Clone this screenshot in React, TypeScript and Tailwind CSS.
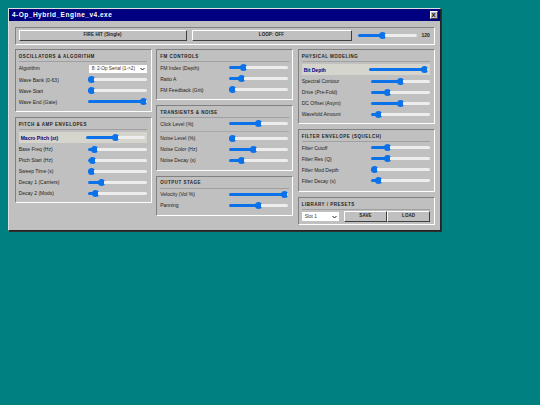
import React from "react";

function Slider({ v, className = "" }: { v: number; className?: string }) {
  return (
    <div className={"flex h-[7px] w-[59px] shrink-0 items-center " + className}>
      <div className="h-[3px] rounded-l-full bg-[#0b72ea]" style={{ width: 3.5 + v * 0.52 }} />
      <div className="ml-[-3.5px] h-[7px] w-[7px] shrink-0 rounded-full bg-[#0b72ea]" />
      <div className="ml-[-1px] h-[3px] flex-1 rounded-r-full bg-[#ededed]" />
    </div>
  );
}

function Row({ label, v }: { label: string; v: number }) {
  return (
    <div className="mb-[5px] flex h-[6px] items-center justify-between pr-[0.6px]">
      <span className="whitespace-nowrap text-[5px] leading-[6px] text-[#222]">{label}</span>
      <Slider v={v} />
    </div>
  );
}

function Macro({ label, v }: { label: string; v: number }) {
  return (
    <div className="mb-[3.5px] mt-[-0.5px] flex h-[10.5px] items-center justify-between bg-[#d6d5cd] pl-[2px] pr-[2.6px]">
      <span className="whitespace-nowrap text-[5px] font-bold leading-[6px] text-[#000080]">{label}</span>
      <Slider v={v} />
    </div>
  );
}

function Panel({ title, children, className = "" }: { title: string; children: React.ReactNode; className?: string }) {
  return (
    <section className={"border border-b-white border-l-[#808080] border-r-white border-t-[#808080] px-[3.2px] pt-[3.5px] " + className}>
      <h2 className="mb-[2.5px] whitespace-nowrap border-b border-[#a0a0a0] pb-[1.5px] text-[4.5px] font-bold leading-[6px] tracking-[0.5px] text-[#222]">
        {title}
      </h2>
      {children}
    </section>
  );
}

function Btn({ children, className = "" }: { children: React.ReactNode; className?: string }) {
  return (
    <button className={"flex items-center justify-center border border-b-[#404040] border-l-white border-r-[#404040] border-t-white bg-[#c0c0c0] text-[4.5px] font-bold tracking-[0.1px] text-[#222] " + className}>
      {children}
    </button>
  );
}

function Select({ text, className = "" }: { text: string; className?: string }) {
  return (
    <div className={"flex items-center justify-between whitespace-nowrap bg-white pl-[3px] pr-[2px] text-[4.75px] text-[#333] " + className}>
      <span>{text}</span>
      <svg width="5" height="4" viewBox="0 0 10 8" fill="none" stroke="#222" strokeWidth="2">
        <path d="M1 2l4 4 4-4" />
      </svg>
    </div>
  );
}

export default function App() {
  return (
    <div className="min-h-[405px] bg-[#008080] pl-[8px] pt-[8px] font-['Liberation_Sans',Arial,sans-serif]">
      <div className="w-[433px] border border-b-[#222] border-l-[#dfdfdf] border-r-[#222] border-t-[#dfdfdf] bg-[#c0c0c0] shadow-[1px_1px_0_#303030]">
        <div className="flex h-[12px] items-center justify-between bg-[#000080] pl-[3px] pr-[2.5px]">
          <span className="text-[6.5px] font-bold leading-[8px] tracking-[0.5px] text-white">4-Op_Hybrid_Engine_v4.exe</span>
          <div className="flex h-[8px] w-[8px] items-center justify-center border border-b-[#404040] border-l-white border-r-[#404040] border-t-white bg-[#c0c0c0] text-[6px] font-bold leading-none text-black">
            X
          </div>
        </div>
        <div className="flex flex-col gap-[4.75px] px-[5.5px] pb-[4.5px] pt-[5.5px]">
          <div className="flex h-[18px] items-center border border-b-white border-l-[#808080] border-r-white border-t-[#808080] pl-[3px]">
            <Btn className="h-[11px] w-[168px]">FIRE HIT (Single)</Btn>
            <Btn className="ml-[5px] h-[11px] w-[160px]">LOOP: OFF</Btn>
            <Slider v={42} className="ml-[6px]" />
            <span className="ml-[5px] text-[5px] font-bold text-[#222]">120</span>
          </div>
          <div className="flex items-start gap-[4.5px]">
            <div className="flex w-[137px] flex-col gap-[5px]">
              <Panel title="OSCILLATORS & ALGORITHM" className="h-[63px]">
                <div className="mb-[4px] flex h-[8px] items-center justify-between">
                  <span className="text-[5px] text-[#222]">Algorithm</span>
                  <Select text="8: 2-Op Serial (1->2)" className="h-[8px] w-[58.7px]" />
                </div>
                <Row label="Wave Bank (0-63)" v={0} />
                <Row label="Wave Start" v={0} />
                <Row label="Wave End (Gate)" v={100} />
              </Panel>
              <Panel title="PITCH & AMP ENVELOPES" className="h-[86px]">
                <Macro label="Macro Pitch (st)" v={50} />
                <Row label="Base Freq (Hz)" v={6} />
                <Row label="Pitch Start (Hz)" v={3} />
                <Row label="Sweep Time (s)" v={0} />
                <Row label="Decay 1 (Carriers)" v={19} />
                <Row label="Decay 2 (Mods)" v={9} />
              </Panel>
            </div>
            <div className="flex w-[137px] flex-col gap-[5px]">
              <Panel title="FM CONTROLS" className="h-[51px]">
                <Row label="FM Index (Depth)" v={20} />
                <Row label="Ratio A" v={17} />
                <Row label="FM Feedback (Grit)" v={0} />
              </Panel>
              <Panel title="TRANSIENTS & NOISE" className="h-[65.5px]">
                <Row label="Click Level (%)" v={50} />
                <div className="mb-[3.6px] mt-[-1px] border-b border-[#a8a8a8]" />
                <Row label="Noise Level (%)" v={0} />
                <Row label="Noise Color (Hz)" v={40} />
                <Row label="Noise Decay (s)" v={16} />
              </Panel>
              <Panel title="OUTPUT STAGE" className="h-[40.5px]">
                <Row label="Velocity (Vol %)" v={100} />
                <Row label="Panning" v={50} />
              </Panel>
            </div>
            <div className="flex w-[137px] flex-col gap-[5px]">
              <Panel title="PHYSICAL MODELING" className="h-[75px]">
                <Macro label="Bit Depth" v={100} />
                <Row label="Spectral Contour" v={50} />
                <Row label="Drive (Pre-Fold)" v={25} />
                <Row label="DC Offset (Asym)" v={50} />
                <Row label="Wavefold Amount" v={8} />
              </Panel>
              <Panel title="FILTER ENVELOPE (SQUELCH)" className="h-[63px]">
                <Row label="Filter Cutoff" v={25} />
                <Row label="Filter Res (Q)" v={25} />
                <Row label="Filter Mod Depth" v={0} />
                <Row label="Filter Decay (s)" v={9} />
              </Panel>
              <Panel title="LIBRARY / PRESETS" className="h-[28px]">
                <div className="mt-[-1.5px] flex items-center">
                  <Select text="Slot 1" className="h-[8.5px] w-[37.6px]" />
                  <Btn className="ml-[5px] h-[10.5px] w-[43px]">SAVE</Btn>
                  <Btn className="h-[10.5px] w-[43.6px]">LOAD</Btn>
                </div>
              </Panel>
            </div>
          </div>
        </div>
      </div>
    </div>
  );
}
